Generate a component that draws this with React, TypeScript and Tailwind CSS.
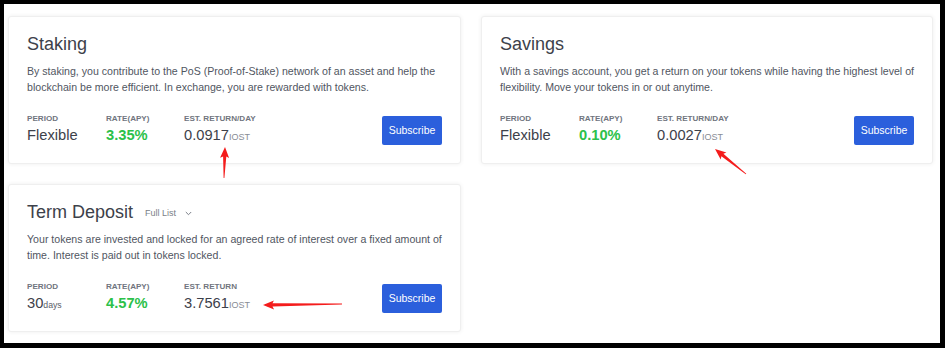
import React from 'react';

interface Stat {
  label: string;
  value: string;
  unit?: string;
  unitClass?: string;
  valueClass?: string;
}

interface ProductCardProps {
  title: string;
  description: string;
  stats: Stat[];
  extra?: React.ReactNode;
}

const font = { fontFamily: '"Liberation Sans", Arial, sans-serif' };

const ProductCard: React.FC<ProductCardProps> = ({ title, description, stats, extra }) => {
  return (
    <div className="bg-white rounded-[3px] border border-[#efefef] shadow-[0_0_4px_rgba(0,0,0,0.07)] pt-[17px] pb-[18px] px-[18px]">
      <div className="flex items-center h-[21px]">
        <h2 className="text-[18px] leading-[21px] text-[#3d414a]">{title}</h2>
        {extra}
      </div>
      <p className="mt-2 -mr-3 text-[10.6px] leading-[16px] text-[#51565f]">{description}</p>
      <div className="flex items-end justify-between mt-[18px]">
        <div className="flex">
          {stats.map((s, i) => (
            <div key={s.label} className={i === 2 ? '' : i === 0 ? 'w-[79px]' : 'w-[78px]'}>
              <div className="text-[8.1px] leading-[12px] font-bold text-[#70757e]">{s.label}</div>
              <div className="h-[20px] leading-[20px] whitespace-nowrap">
                <span className={s.valueClass ?? 'text-[14.7px] text-[#3d414a]'}>{s.value}</span>
                {s.unit && <span className={s.unitClass ?? 'text-[9px] text-[#878c94]'}>{s.unit}</span>}
              </div>
            </div>
          ))}
        </div>
        <button className="w-[60px] h-[29px] rounded-[2px] bg-[#2b5fdc] text-white text-[10.5px]">
          Subscribe
        </button>
      </div>
    </div>
  );
};

function arrowPoints(tx: number, ty: number, px: number, py: number) {
  const dx = px - tx;
  const dy = py - ty;
  const len = Math.hypot(dx, dy);
  const ux = dx / len;
  const uy = dy / len;
  const nx = -uy;
  const ny = ux;
  const head = 11;
  const hw = 4.5;
  const neck = 1.6;
  const tail = 0.4;
  const bx = px - ux * head;
  const by = py - uy * head;
  const pts = [
    [tx + nx * tail, ty + ny * tail],
    [bx + nx * neck + ux * 1.5, by + ny * neck + uy * 1.5],
    [bx + nx * hw, by + ny * hw],
    [px, py],
    [bx - nx * hw, by - ny * hw],
    [bx - nx * neck + ux * 1.5, by - ny * neck + uy * 1.5],
    [tx - nx * tail, ty - ny * tail],
  ];
  return pts.map(p => `${p[0].toFixed(1)},${p[1].toFixed(1)}`).join(' ');
}

// annotation arrows, drawn in page coordinates over the cards
const Arrows = () => (
  <svg className="absolute -left-1 -top-1 pointer-events-none" width="945" height="348" viewBox="0 0 945 348">
    <polygon points={arrowPoints(224, 178, 225, 147)} fill="#f41c1c" />
    <polygon points={arrowPoints(746, 174, 715, 149)} fill="#f41c1c" />
    <polygon points={arrowPoints(342, 304, 263, 305)} fill="#f41c1c" />
  </svg>
);

export default function App() {
  const green = 'text-[14.7px] font-bold text-[#2cc14a]';
  return (
    <div
      className="relative w-[945px] h-[348px] bg-white border-black border-t-4 border-l-4 border-r-[5px] border-b-[5px] overflow-hidden"
      style={font}
    >
      <div className="grid grid-cols-[453px_452px] gap-5 pl-1 pt-3">
        <ProductCard
          title="Staking"
          description="By staking, you contribute to the PoS (Proof-of-Stake) network of an asset and help the blockchain be more efficient. In exchange, you are rewarded with tokens."
          stats={[
            { label: 'PERIOD', value: 'Flexible' },
            { label: 'RATE(APY)', value: '3.35%', valueClass: green },
            { label: 'EST. RETURN/DAY', value: '0.0917', unit: 'IOST' },
          ]}
        />
        <ProductCard
          title="Savings"
          description="With a savings account, you get a return on your tokens while having the highest level of flexibility. Move your tokens in or out anytime."
          stats={[
            { label: 'PERIOD', value: 'Flexible' },
            { label: 'RATE(APY)', value: '0.10%', valueClass: green },
            { label: 'EST. RETURN/DAY', value: '0.0027', unit: 'IOST' },
          ]}
        />
        <ProductCard
          title="Term Deposit"
          extra={
            <div className="flex items-center ml-3 mt-[2px] text-[9px] text-[#7a7f88]">
              <span>Full List</span>
              <svg className="ml-[9px]" width="7" height="5" viewBox="0 0 7 5">
                <path d="M0.8 1 L3.5 3.7 L6.2 1" fill="none" stroke="#7a7f88" strokeWidth="1" />
              </svg>
            </div>
          }
          description="Your tokens are invested and locked for an agreed rate of interest over a fixed amount of time. Interest is paid out in tokens locked."
          stats={[
            { label: 'PERIOD', value: '30', unit: 'days', unitClass: 'text-[8.7px] text-[#5b6069]' },
            { label: 'RATE(APY)', value: '4.57%', valueClass: green },
            { label: 'EST. RETURN', value: '3.7561', unit: 'IOST' },
          ]}
        />
      </div>
      <Arrows />
    </div>
  );
}
